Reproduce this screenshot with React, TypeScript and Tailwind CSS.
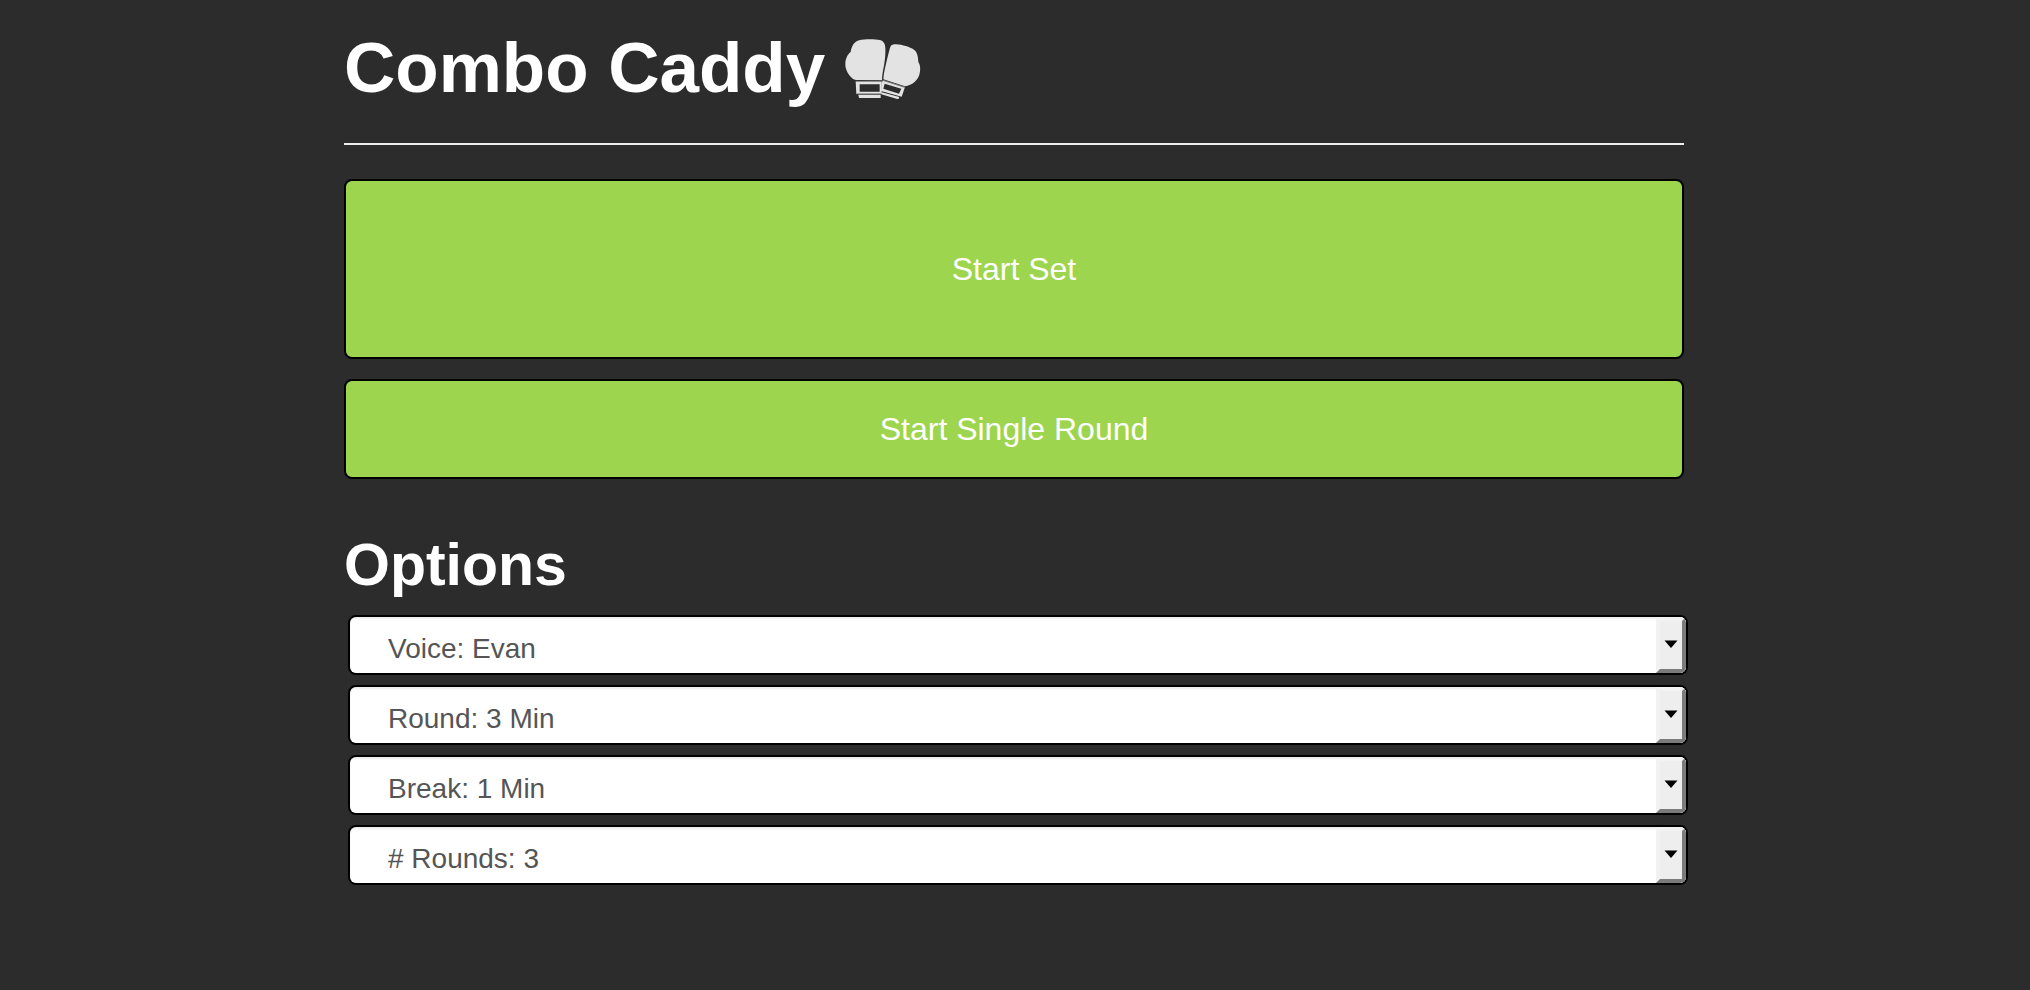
import { useState } from "react";

const options = [
  { id: "voice", label: "Voice", choices: ["Voice: Evan", "Voice: Samantha", "Voice: Alex"] },
  { id: "round", label: "Round length", choices: ["Round: 3 Min", "Round: 2 Min", "Round: 1 Min"] },
  { id: "break", label: "Break length", choices: ["Break: 1 Min", "Break: 30 Sec"] },
  { id: "rounds", label: "Number of rounds", choices: ["# Rounds: 3", "# Rounds: 6", "# Rounds: 12"] },
];

function Gloves() {
  return (
    <svg viewBox="32 26 228 180" className="mt-0.5 h-[60px] w-[76px] shrink-0" fill="#e3e3e3" aria-hidden="true">
      <path d="M65 149 C50 145 39 129 34 112 C31 96 35 75 49 65 C52 48 58 35 74 30 C91 26 119 26 137 29 C148 32 153 41 153 54 C154 76 151 94 148 111 C145 126 143 139 143 150 Z" />
      <path d="M167 52 C170 43 176 41 185 42 C205 43 226 50 239 58 C249 65 251 78 252 94 C259 105 259 119 255 133 C250 150 234 164 212 168 L147 147 C148 139 148 132 151 118 C156 97 161 73 167 52 Z" />
      <path fillRule="evenodd" d="M64 153 H142 V191 H66 Z M76 162 V184 H136 V162 Z" />
      <path d="M72 193 H139 V203 H74 Z" />
      <path fillRule="evenodd" d="M146 149 L212 170 L202 199 L140 182 L142 158 Z M151 160 L147 175 L194 190 L201 175 Z" />
      <path d="M142 186 L195 200 L192 207 L141 192 Z" />
      <path d="M64 152 H142" stroke="#444" strokeWidth="2" />
      <path d="M145 150 L211 171" stroke="#444" strokeWidth="2" />
      <path d="M67 190 H140" stroke="#999" strokeWidth="3" />
    </svg>
  );
}

function OptionSelect({ id, label, choices }: { id: string; label: string; choices: string[] }) {
  const [value, setValue] = useState(choices[0]);
  return (
    <div className="relative overflow-hidden rounded-lg border-2 border-black bg-white">
      <select
        id={id}
        aria-label={label}
        value={value}
        onChange={(e) => setValue(e.target.value)}
        className="block h-14 w-full appearance-none bg-white pt-2 pr-10 pl-[38px] text-[28px] leading-8 text-[#555] shadow-[inset_0_2px_2px_rgba(0,0,0,0.075)]"
      >
        {choices.map((choice) => (
          <option key={choice}>{choice}</option>
        ))}
      </select>
      <span className="pointer-events-none absolute inset-y-0 right-0 flex w-[30px] items-center justify-center border-4 border-t-[#f2f2f2] border-r-[#7b7b7b] border-b-[#7b7b7b] border-l-[#f2f2f2] bg-[#eee]">
        <svg viewBox="0 0 14 8" className="mb-0.5 h-2 w-3.5 shrink-0" aria-hidden="true">
          <path d="M0.5 0.5 H13.5 L7 8 Z" fill="#000" />
        </svg>
      </span>
    </div>
  );
}

const buttonClass =
  "block w-full cursor-pointer rounded-lg border-2 border-black bg-[#9dd54e] text-center text-[32px] leading-10 text-white";

export default function App() {
  return (
    <div className="min-h-screen bg-[#2c2c2c] pr-[18px] pl-4 font-['Liberation_Sans',Arial,sans-serif] text-white">
      <main className="mx-auto max-w-[1340px] pb-8">
        <header className="flex items-center gap-5 border-b-2 border-[#eee] pt-7 pb-[35px]">
          <h1 className="text-[71px] leading-20 font-bold">Combo Caddy</h1>
          <Gloves />
        </header>
        <div className="mt-[34px] flex flex-col gap-5">
          <button type="button" className={buttonClass + " py-[68px]"}>Start Set</button>
          <button type="button" className={buttonClass + " py-7"}>Start Single Round</button>
        </div>
        <h2 className="mt-[50px] text-[59px] leading-18 font-bold">Options</h2>
        <div className="mt-[14px] -mr-1 ml-1 flex flex-col gap-2.5">
          {options.map((option) => (
            <OptionSelect key={option.id} {...option} />
          ))}
        </div>
      </main>
    </div>
  );
}
